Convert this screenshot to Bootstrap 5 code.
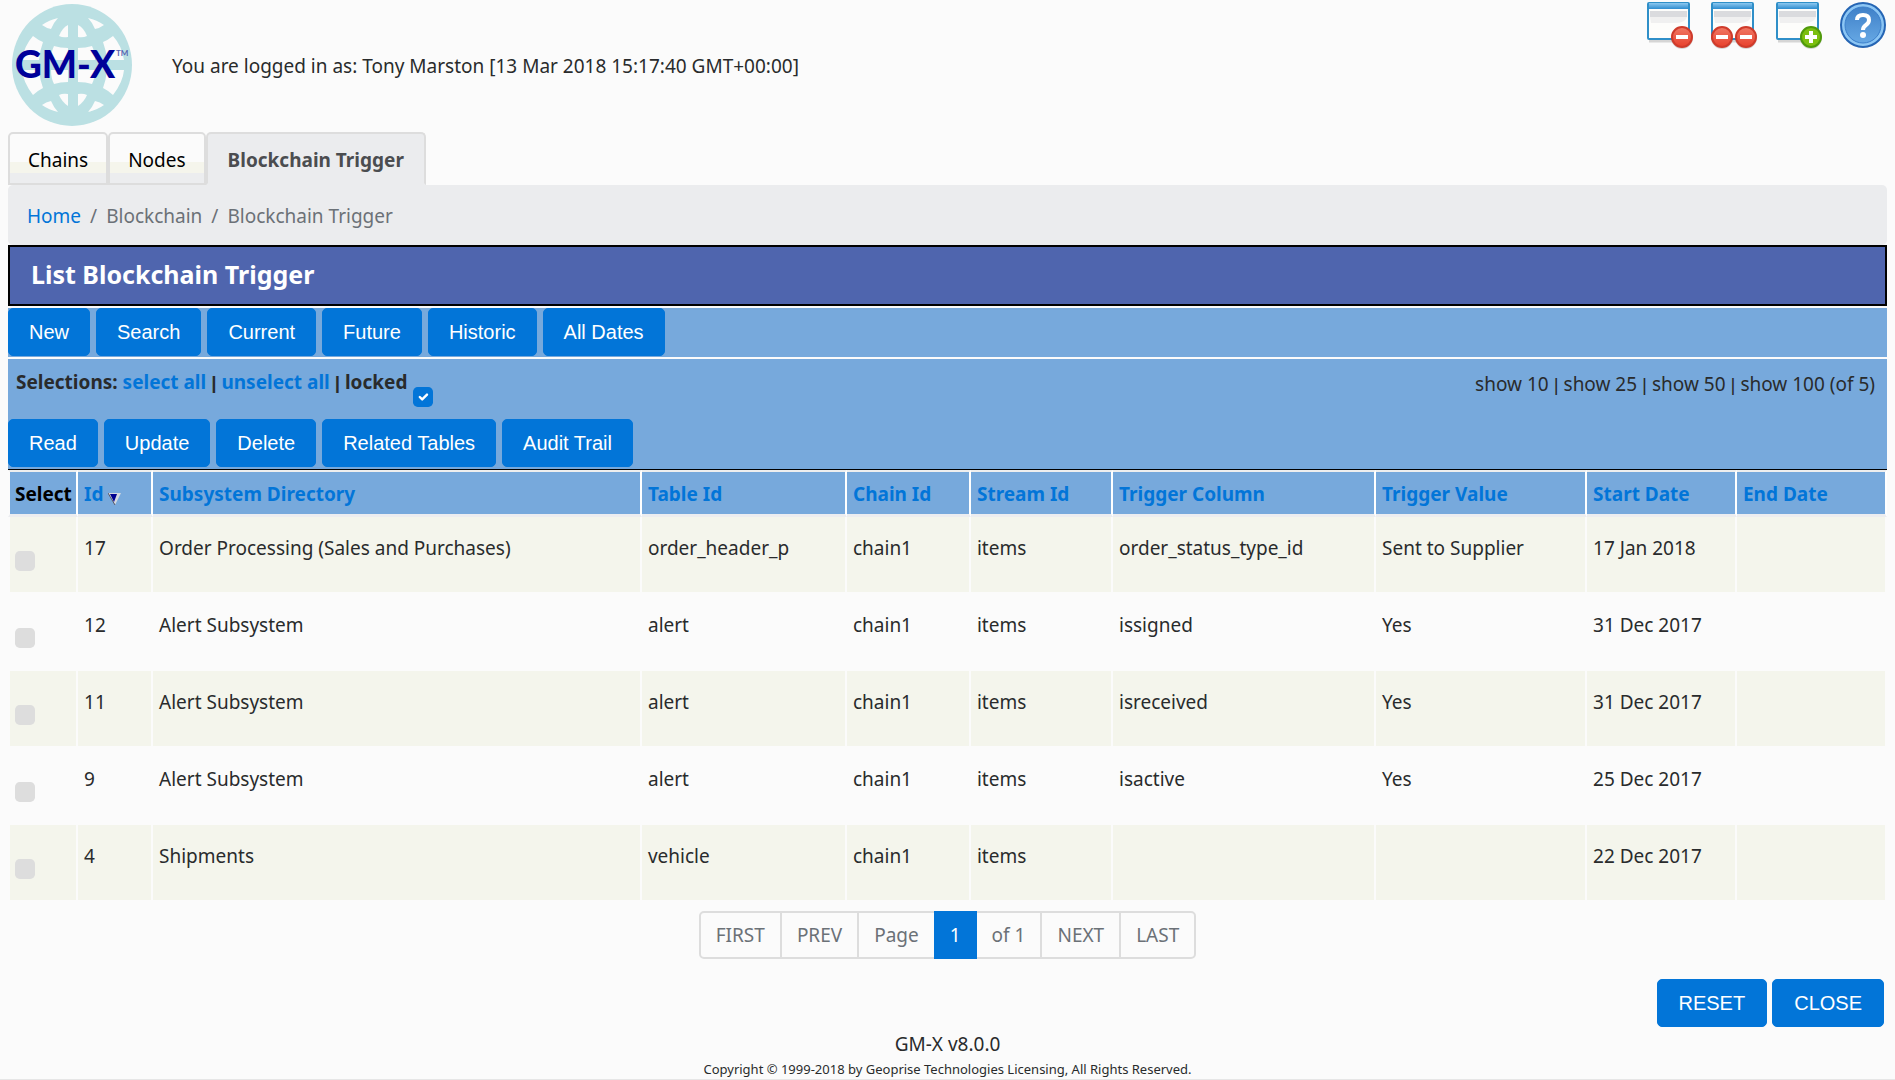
<!DOCTYPE html>
<html lang="en">
<head>
<meta charset="utf-8">
<meta name="viewport" content="width=device-width, initial-scale=1">
<title>List Blockchain Trigger</title>
<link href="https://cdn.jsdelivr.net/npm/bootstrap@5.3.0/dist/css/bootstrap.min.css" rel="stylesheet">
<style>
body { font-family: "Noto Sans", sans-serif; font-size: 19px; line-height: 30px; color: #292b2c; background: #fbfbfb; }
a { color: #0275d8; text-decoration: none; }
.page { padding: 0 8px; }
.masthead { height: 132px; }
.login { padding: 0 38px; }
.brand-word { font: 900 37px Lato, sans-serif; fill: #000099; }
.brand-tm { font: 700 8px Lato, sans-serif; fill: #5560b0; }
.tools { gap: 16px; }
.tools a { line-height: 0; }
.nav-tabs { border: 0; }
.nav-tabs .nav-link { padding: 11px 18px 8px; border: 2px solid #ddd; border-radius: 5px 5px 0 0; margin: 0; color: #000; line-height: 30px;
  background: linear-gradient(#fbfbfb 28px, #f5f5ec 28px 39px, #ecedef 39px); }
.nav-tabs .nav-link.active { background: #ebecee; color: #4b4d50; font-weight: 700; padding-left: 20px; padding-right: 20px; border-color: #ddd #ddd #ebecee; }
.crumbs { background: #ebecee; border-radius: 5px; padding: 16px 19px 14px; margin: 0; --bs-breadcrumb-divider-color: #6b7177; --bs-breadcrumb-item-padding-x: 9px; }
.crumbs .breadcrumb-item { color: #6b7177; }
.titlebar { background: #4f65ae; border: 2px solid #000; color: #fff; font-size: 25px; font-weight: 700; line-height: 55px; padding: 0 21px 2px; margin: 0 0 2px; }
.bar { background: #77a9dc; }
.bar-top { border-bottom: 2px solid #fbfbfb; padding-bottom: 1px; }
.bar-mid { border-bottom: 1px solid #000; padding-bottom: 2px; }
.btn-app { font: 20px/30px "Liberation Sans", Arial, sans-serif; color: #fff; background: #0275d8; border: 1px solid #0275d8; border-radius: 5px; padding: 8px 20px; }
.btn-app:hover { color: #fff; background: #025aa5; }
.btns { gap: 6px; }
.picks { padding: 8px 8px 0; height: 60px; }
.pipe { font-family: "Liberation Sans", Arial, sans-serif; }
.shows { padding: 2px 4px; }
.shows a { color: inherit; }
.tick { width: 20px; height: 20px; border: 0; border-radius: 5px; background-color: #ddd; margin: 0; display: block; }
.tick:checked { background-color: #0275d8; background-size: 16px; }
.tick-locked { margin: 20px 0 0 6px; }
.grid { table-layout: fixed; border-collapse: separate; border-spacing: 0; margin: 0; color: #292b2c; }
.grid th, .grid td { border: 0 solid #fbfbfb; border-right-width: 2px; vertical-align: top; white-space: nowrap; box-shadow: none; }
.grid thead th { background: #77a9dc; color: #000; height: 47px; padding: 7px 5px 5px 6px; border-top: 2px solid #eee; border-bottom: 3px solid #ecedf0; border-right-color: #fff; }
.grid tbody td { height: 77px; padding: 16px 6px; border-bottom-width: 2px; background: transparent; }
.grid tbody tr:nth-child(odd) td { background: #f4f5ec; }
.grid tr > :first-child { border-left-width: 2px; padding-left: 5px; padding-right: 0; }
.grid td .tick { margin-top: 18px; }
.sort { vertical-align: -4px; }
.c1 { width: 3.73%; } .c2 { width: 3.99%; } .c3 { width: 26.02%; } .c4 { width: 10.91%; } .c5 { width: 6.6%; }
.c6 { width: 7.56%; } .c7 { width: 14%; } .c8 { width: 11.23%; } .c9, .c10 { width: 7.98%; }
.pager { margin: 9px 0 20px; --bs-pagination-font-size: 19px; }
.pager .page-link { border: 2px solid #ddd; color: #6b7177; background: #fbfbfb; padding: 8px 15px; line-height: 28px; border-radius: 0; }
.pager .page-item + .page-item .page-link { margin-left: -2px; }
.pager .page-item:first-child .page-link { border-radius: 5px 0 0 5px; }
.pager .page-item:last-child .page-link { border-radius: 0 5px 5px 0; }
.pager .active .page-link { background: #0275d8; border-color: #0275d8; color: #fff; padding-left: 14px; padding-right: 14px; }
.foot-btns { padding: 0 3px; gap: 5px; }
.foot-btns .btn-app { padding-left: 21px; padding-right: 21px; }
.foot { padding: 2px 0 0; border-bottom: 1px solid #e6e6e6; }
.foot small { font-size: 13px; line-height: 20px; display: block; }
</style>
</head>
<body>
<svg width="0" height="0" class="d-block" aria-hidden="true">
  <defs>
    <linearGradient id="bar-fill" x1="0" y1="0" x2="0" y2="1"><stop offset="0" stop-color="#8cc8f0"/><stop offset="1" stop-color="#2e8ccf"/></linearGradient>
    <linearGradient id="red-fill" x1="0" y1="0" x2="0" y2="1"><stop offset="0" stop-color="#f07a66"/><stop offset="1" stop-color="#e8402c"/></linearGradient>
    <linearGradient id="help-fill" x1="0" y1="0" x2="0" y2="1"><stop offset="0" stop-color="#3f80c8"/><stop offset="1" stop-color="#66a8e4"/></linearGradient>
    <g id="window">
      <path d="M2 41H43" stroke="#000" stroke-opacity=".15" stroke-width="3"/>
      <rect x="1" y="3" width="41" height="36" rx="1" fill="#fdfdfb" stroke="#2f8fc8" stroke-width="2"/>
      <rect x="2" y="3" width="39" height="6" fill="url(#bar-fill)"/>
      <path d="M3 11H40V17H3Z" fill="#dadbde"/>
      <path d="M3 17H40Q38 23 28 23H4Z" fill="#f0f0f0"/>
    </g>
    <g id="minus">
      <circle cy="1" r="11" fill="#000" opacity=".15"/>
      <circle r="10" fill="url(#red-fill)" stroke="#cf3b2b" stroke-width="2"/>
      <path d="M-6 0H6" stroke="#fff" stroke-width="4"/>
    </g>
  </defs>
</svg>
<div class="page">
  <header class="masthead d-flex align-items-start">
    <svg class="flex-shrink-0" width="126" height="132" viewBox="8 0 126 132" role="img" aria-label="GM-X">
      <ellipse cx="72" cy="65" rx="60" ry="61" fill="#bbe0e3"/>
      <g fill="#fbfbfb" id="globe-half">
        <path d="M42 25Q49 20 58 18Q54 22 51 29Q46 28 42 25Z"/>
        <path d="M59 36Q62 28 68 25V37Q63 38 59 36Z"/>
        <path d="M33 36Q38 40 43 42Q40 50 39 60H22Q24 46 33 36Z"/>
        <path d="M54 46Q60 48 68 48V60H51Q51 52 54 46Z"/>
        <path d="M22 70H39Q40 80 43 88Q37 91 33 95Q23 82 22 70Z"/>
        <path d="M51 70H68V82Q60 82 54 84Q51 78 51 70Z"/>
        <path d="M59 95Q63 93 68 94V106Q62 102 59 95Z"/>
        <path d="M42 105Q46 102 51 101Q54 108 58 112Q49 110 42 105Z"/>
      </g>
      <use href="#globe-half" transform="matrix(-1 0 0 1 146 0)"/>
      <text class="brand-word" x="15" y="78">GM-X</text>
      <text class="brand-tm" x="116" y="56">TM</text>
    </svg>
    <div class="login flex-grow-1 align-self-center">You are logged in as: Tony Marston [13 Mar 2018 15:17:40 GMT+00:00]</div>
    <nav class="tools d-flex" aria-label="Window tools">
      <a href="#" aria-label="Close window"><svg width="48" height="50"><use href="#window"/><use href="#minus" x="35" y="37"/></svg></a>
      <a href="#" aria-label="Close all windows"><svg width="48" height="50"><use href="#window"/><use href="#minus" x="11" y="37"/><use href="#minus" x="35" y="37"/></svg></a>
      <a href="#" aria-label="New window"><svg width="48" height="50"><use href="#window" x="1"/><circle cx="36" cy="38" r="11" opacity=".15"/><circle cx="36" cy="37" r="10" fill="#7cbf10" stroke="#4f9a0a" stroke-width="2"/><path d="M30 37H42M36 31V43" stroke="#fff" stroke-width="4"/></svg></a>
      <a href="#" aria-label="Help"><svg width="48" height="50"><circle cx="24" cy="26" r="22" opacity=".15"/><circle cx="24" cy="25" r="22" fill="#8cc6f4" stroke="#2565b4" stroke-width="2"/><circle cx="24" cy="25" r="18" fill="url(#help-fill)" stroke="#3b7fcb"/><path d="M18 20Q18 15 24 15Q30 15 30 20Q30 23 27 25Q24 27 24 30" fill="none" stroke="#fff" stroke-width="4"/><circle cx="24" cy="35" r="3" fill="#fff"/></svg></a>
    </nav>
  </header>

  <ul class="nav nav-tabs">
    <li class="nav-item"><a class="nav-link" href="#">Chains</a></li>
    <li class="nav-item"><a class="nav-link" href="#">Nodes</a></li>
    <li class="nav-item"><a class="nav-link active" aria-current="page" href="#">Blockchain Trigger</a></li>
  </ul>

  <nav aria-label="Breadcrumb">
    <ol class="breadcrumb crumbs">
      <li class="breadcrumb-item"><a href="#">Home</a></li>
      <li class="breadcrumb-item">Blockchain</li>
      <li class="breadcrumb-item">Blockchain Trigger</li>
    </ol>
  </nav>

  <h1 class="titlebar">List Blockchain Trigger</h1>

  <div class="bar bar-top d-flex flex-wrap btns">
    <button type="button" class="btn btn-app">New</button>
    <button type="button" class="btn btn-app">Search</button>
    <button type="button" class="btn btn-app">Current</button>
    <button type="button" class="btn btn-app">Future</button>
    <button type="button" class="btn btn-app">Historic</button>
    <button type="button" class="btn btn-app">All Dates</button>
  </div>

  <div class="bar bar-mid">
    <div class="picks d-flex justify-content-between align-items-start">
      <div class="d-flex align-items-start fw-bold">
        <div>Selections: <a href="#">select all</a> <span class="pipe">|</span> <a href="#">unselect all</a> <span class="pipe">|</span> <label for="locked">locked</label></div>
        <input type="checkbox" class="form-check-input tick tick-locked" id="locked" checked>
      </div>
      <div class="shows"><a href="#">show 10</a> <span class="pipe">|</span> <a href="#">show 25</a> <span class="pipe">|</span> <a href="#">show 50</a> <span class="pipe">|</span> <a href="#">show 100</a> (of 5)</div>
    </div>
    <div class="d-flex flex-wrap btns">
      <button type="button" class="btn btn-app">Read</button>
      <button type="button" class="btn btn-app">Update</button>
      <button type="button" class="btn btn-app">Delete</button>
      <button type="button" class="btn btn-app">Related Tables</button>
      <button type="button" class="btn btn-app">Audit Trail</button>
    </div>
  </div>

  <table class="table grid">
    <thead>
      <tr>
        <th scope="col" class="c1">Select</th>
        <th scope="col" class="c2"><a href="#">Id</a> <svg class="sort" width="13" height="12" aria-hidden="true"><path d="M0 0H13L7 12Z" fill="#d5d9e0"/><path d="M0 0L7 12" stroke="#556"/><path d="M2 1H9L6 9Z" fill="#000090"/></svg></th>
        <th scope="col" class="c3"><a href="#">Subsystem Directory</a></th>
        <th scope="col" class="c4"><a href="#">Table Id</a></th>
        <th scope="col" class="c5"><a href="#">Chain Id</a></th>
        <th scope="col" class="c6"><a href="#">Stream Id</a></th>
        <th scope="col" class="c7"><a href="#">Trigger Column</a></th>
        <th scope="col" class="c8"><a href="#">Trigger Value</a></th>
        <th scope="col" class="c9"><a href="#">Start Date</a></th>
        <th scope="col" class="c10"><a href="#">End Date</a></th>
      </tr>
    </thead>
    <tbody>
      <tr><td><input type="checkbox" class="form-check-input tick" aria-label="Select 17"></td><td>17</td><td>Order Processing (Sales and Purchases)</td><td>order_header_p</td><td>chain1</td><td>items</td><td>order_status_type_id</td><td>Sent to Supplier</td><td>17 Jan 2018</td><td></td></tr>
      <tr><td><input type="checkbox" class="form-check-input tick" aria-label="Select 12"></td><td>12</td><td>Alert Subsystem</td><td>alert</td><td>chain1</td><td>items</td><td>issigned</td><td>Yes</td><td>31 Dec 2017</td><td></td></tr>
      <tr><td><input type="checkbox" class="form-check-input tick" aria-label="Select 11"></td><td>11</td><td>Alert Subsystem</td><td>alert</td><td>chain1</td><td>items</td><td>isreceived</td><td>Yes</td><td>31 Dec 2017</td><td></td></tr>
      <tr><td><input type="checkbox" class="form-check-input tick" aria-label="Select 9"></td><td>9</td><td>Alert Subsystem</td><td>alert</td><td>chain1</td><td>items</td><td>isactive</td><td>Yes</td><td>25 Dec 2017</td><td></td></tr>
      <tr><td><input type="checkbox" class="form-check-input tick" aria-label="Select 4"></td><td>4</td><td>Shipments</td><td>vehicle</td><td>chain1</td><td>items</td><td></td><td></td><td>22 Dec 2017</td><td></td></tr>
    </tbody>
  </table>

  <nav aria-label="Pages">
    <ul class="pagination justify-content-center pager">
      <li class="page-item"><a class="page-link" href="#">FIRST</a></li>
      <li class="page-item"><a class="page-link" href="#">PREV</a></li>
      <li class="page-item"><span class="page-link">Page</span></li>
      <li class="page-item active" aria-current="page"><span class="page-link">1</span></li>
      <li class="page-item"><span class="page-link">of 1</span></li>
      <li class="page-item"><a class="page-link" href="#">NEXT</a></li>
      <li class="page-item"><a class="page-link" href="#">LAST</a></li>
    </ul>
  </nav>

  <div class="foot-btns d-flex justify-content-end">
    <button type="reset" class="btn btn-app">RESET</button>
    <button type="button" class="btn btn-app">CLOSE</button>
  </div>
</div>
<footer class="foot text-center">GM-X v8.0.0<small>Copyright © 1999-2018 by Geoprise Technologies Licensing, All Rights Reserved.</small></footer>
<script src="https://cdn.jsdelivr.net/npm/bootstrap@5.3.0/dist/js/bootstrap.bundle.min.js"></script>
</body>
</html>
